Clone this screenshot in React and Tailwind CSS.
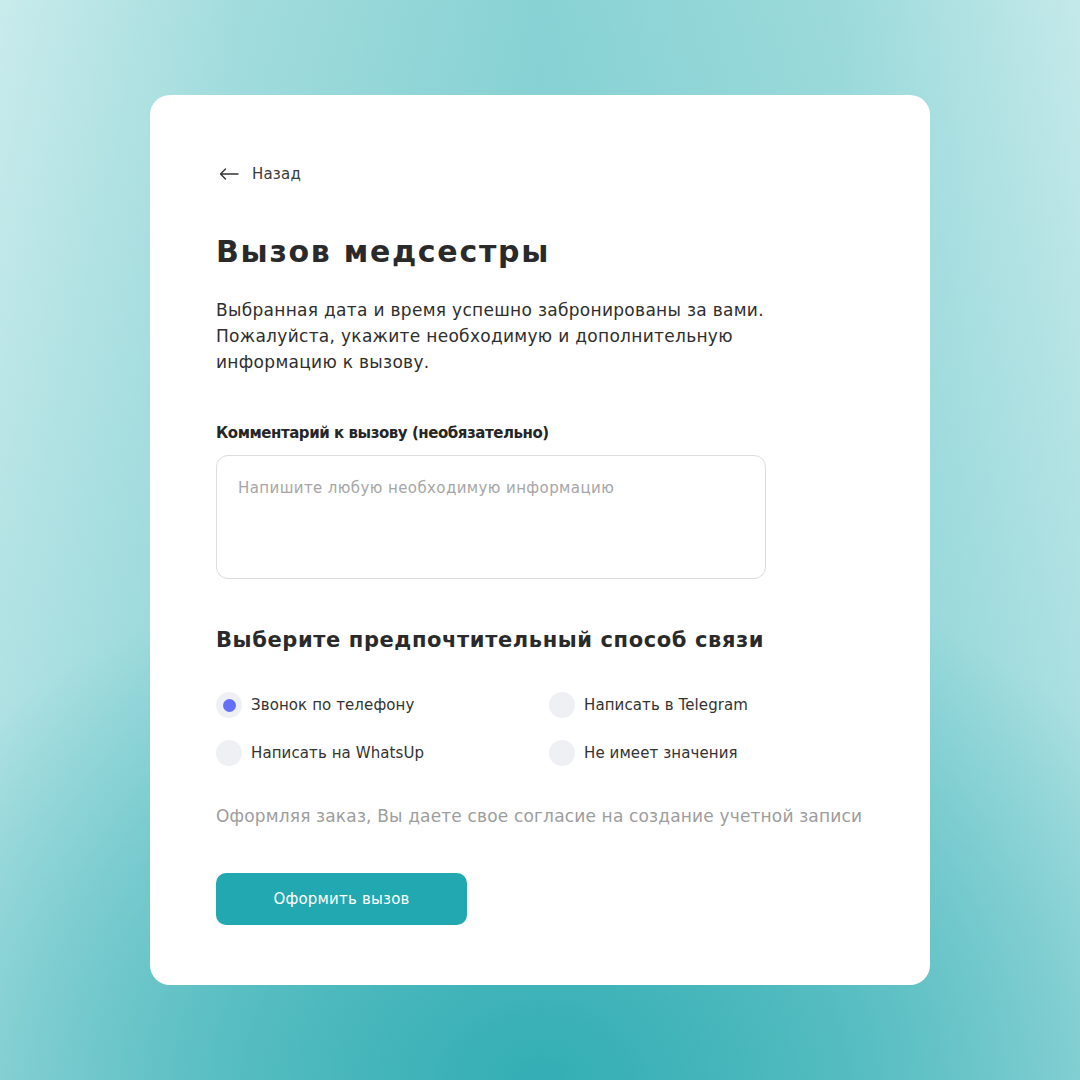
import React, { useState } from "react";

const options = [
  { id: "phone", label: "Звонок по телефону" },
  { id: "telegram", label: "Написать в Telegram" },
  { id: "whatsapp", label: "Написать на WhatsUp" },
  { id: "any", label: "Не имеет значения" },
];

const App = () => {
  const [contact, setContact] = useState("phone");
  const [comment, setComment] = useState("");

  return (
    <div
      className="w-[1080px] h-[1080px] flex items-center justify-center bg-[#88d2d4] bg-[radial-gradient(ellipse_68%_50%_at_50%_100%,#33aeb4_0%,rgba(51,174,180,0.55)_45%,rgba(51,174,180,0)_100%),linear-gradient(180deg,rgba(70,185,190,0)_0%,rgba(70,185,190,0.3)_100%),linear-gradient(90deg,#c9ebec_0%,#a2dcdd_22%,#88d2d4_50%,#9cdadb_78%,#c4e9ea_100%)]"
      style={{ fontFamily: '"DejaVu Sans", "Noto Sans", sans-serif' }}
    >
      <div className="w-[780px] h-[890px] bg-white rounded-[20px] pl-[66px] pr-[40px] pt-[69px] flex flex-col">
        <button className="flex items-center gap-[13px] text-[15px] leading-[20px] text-[#3a3a3a] w-fit">
          <svg width="20" height="12" viewBox="0 0 20 12" fill="none" className="ml-[3px]">
            <path
              d="M19 6H1.5M6.5 1L1.5 6l5 5"
              stroke="#333"
              strokeWidth="1.4"
              strokeLinecap="round"
              strokeLinejoin="round"
            />
          </svg>
          <span className="tracking-[0.2px]">Назад</span>
        </button>

        <h1 className="mt-[48px] text-[30px] font-semibold text-[#2a2a2a] leading-[40px] tracking-[1.7px]">
          Вызов медсестры
        </h1>

        <p className="mt-[25px] text-[17px] leading-[26px] text-[#2e2e2e] w-[570px] tracking-[0.3px]">
          Выбранная дата и время успешно забронированы за вами. Пожалуйста,
          укажите необходимую и дополнительную информацию к вызову.
        </p>

        <label className="mt-[48px] text-[15px] font-semibold text-[#262626] leading-[20px] tracking-[-0.45px]">
          Комментарий к вызову (необязательно)
        </label>
        <textarea
          value={comment}
          onChange={(e) => setComment(e.target.value)}
          placeholder="Напишите любую необходимую информацию"
          className="mt-[12px] w-[550px] h-[124px] resize-none rounded-[12px] border border-[#dcdcdc] px-[21px] py-[21px] text-[15px] leading-[22px] tracking-[0.4px] text-[#333] placeholder:text-[#a6a6a6] outline-none"
        />

        <h2 className="mt-[46px] text-[21px] font-semibold text-[#2a2a2a] leading-[30px] tracking-[0.6px]">
          Выберите предпочтительный способ связи
        </h2>

        <div className="mt-[37px] grid grid-cols-[333px_1fr] gap-y-[22px]">
          {options.map((o) => (
            <button
              key={o.id}
              onClick={() => setContact(o.id)}
              className="flex items-center gap-[9px] text-[15px] leading-[26px] text-[#333] w-fit tracking-[0.1px]"
            >
              <span className="w-[26px] h-[26px] rounded-full bg-[#eff0f4] flex items-center justify-center">
                {contact === o.id && (
                  <span className="w-[13px] h-[13px] rounded-full bg-[#6470fb]" />
                )}
              </span>
              <span>{o.label}</span>
            </button>
          ))}
        </div>

        <p className="mt-[38px] text-[17px] text-[#9d9d9d] leading-[24px] tracking-[0.16px] whitespace-nowrap">
          Оформляя заказ, Вы даете свое согласие на создание учетной записи
        </p>

        <button className="mt-[45px] w-[251px] h-[52px] rounded-[10px] bg-[#22a8b0] text-white text-[15px] tracking-[0.2px]">
          Оформить вызов
        </button>
      </div>
    </div>
  );
};

export default App;
